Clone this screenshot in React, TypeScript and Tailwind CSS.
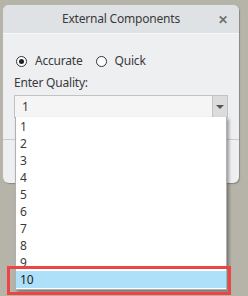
import React from "react";

const items = ["1", "2", "3", "4", "5", "6", "7", "8", "9", "10"];

function Radio({ checked, label }: { checked?: boolean; label: string }) {
  return (
    <label className="flex items-center gap-[8px]">
      <span className="w-[11px] h-[11px] rounded-full border border-[#333] bg-white flex items-center justify-center">
        {checked && <span className="w-[5px] h-[5px] rounded-full bg-[#222]" />}
      </span>
      <span>{label}</span>
    </label>
  );
}

export default function App() {
  return (
    <div
      className="relative w-[248px] h-[296px] bg-[#b6b3a9] overflow-hidden text-[12px] tracking-[-0.2px] text-[#3a3a3a]"
      style={{ fontFamily: '"Noto Sans", "Open Sans", sans-serif' }}
    >
      <div className="absolute left-[3px] top-[5px] w-[236px] h-[178px] rounded-[6px] bg-[#eeeff1] shadow-[1px_1px_1px_rgba(0,0,0,0.25)] overflow-hidden flex flex-col">
        <div className="h-[29px] bg-[#dfe2e5] border-b border-[#f6f7f8] relative flex items-center justify-center">
          <span className="leading-none">External Components</span>
          <span className="absolute right-[11px] top-[9px] text-[#707070] text-[12px] font-bold leading-none">✕</span>
        </div>
        <div className="px-[11px] pt-[18px]">
          <div className="flex items-center gap-[13px] pl-[2px] h-[18px]">
            <Radio checked label="Accurate" />
            <Radio label="Quick" />
          </div>
          <div className="mt-[4px] h-[18px] leading-[18px]">Enter Quality:</div>
          <div className="mt-[3px] h-[23px] flex border border-[#c3c3c3] bg-[#f5f5f5]">
            <span className="flex-1 pl-[7px] leading-[21px]">1</span>
            <span className="w-[15px] border-l border-[#c3c3c3] bg-[#dcdcdc] flex items-center justify-center">
              <svg width="8" height="4" viewBox="0 0 8 4">
                <path d="M0 0H8L4 4Z" fill="#555" />
              </svg>
            </span>
          </div>
        </div>
        <div className="mt-[21px] border-t border-[#c9cacc]" />
      </div>

      <div className="absolute left-[15px] top-[117px] w-[212px] bg-white border border-[#b0b0b0] border-t-0 shadow-[2px_2px_3px_rgba(0,0,0,0.35)] py-[1px]">
        {items.map((n) => (
          <div
            key={n}
            className={
              "h-[17px] leading-[17px] pl-[4px] " + (n === "10" ? "bg-[#aee0fa] text-[#222]" : "")
            }
          >
            {n}
          </div>
        ))}
      </div>

      <div className="absolute left-[7px] top-[266px] w-[224px] h-[29px] border-[3px] border-[#ec4545]" />
    </div>
  );
}
